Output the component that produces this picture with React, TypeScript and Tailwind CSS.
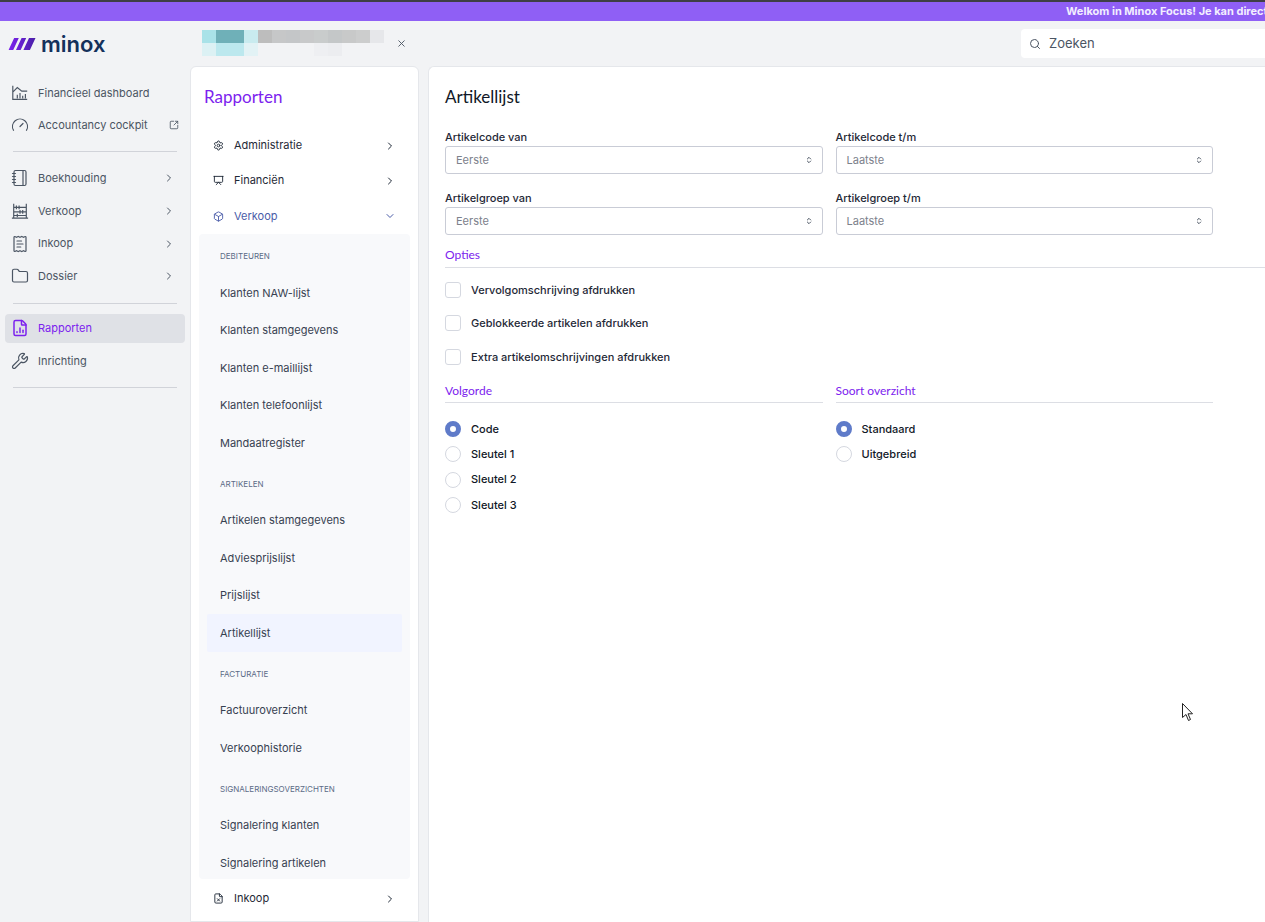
import React from 'react';
import { ChevronRight, ChevronDown, ChevronsUpDown, X, Search, Folder, Settings, Presentation, SquareArrowOutUpRight, Wrench, FileChartColumn, Notebook, ReceiptText, Gauge, Box, FileX } from 'lucide-react';

const mosaic = [
  ['#a9e2e8', '#6fb0b8', '#6fb0b8', '#c9ebef', '#bdbdbd', '#c6c7c8', '#c4c6c8', '#c8c9ca', '#c9cccc', '#c4c7c8', '#c8c9c9', '#cccdcd', '#e6e7ea'],
  ['#dcf1f4', '#bce8ee', '#bce8ee', '#e2f2f5', '#f2f3f5', '#f2f3f5', '#f2f3f5', '#f2f3f5', '#eeeff2', '#ecedf0', '#f2f3f5', '#f2f3f5', '#f2f3f5'],
];

function HouseChart({ className }: { className?: string }) {
  return (
    <svg viewBox="0 0 20 20" fill="none" stroke="currentColor" strokeWidth="1.3" className={className}>
      <path d="M2 2v15h16M2 9l5-5 5 4 6 0" />
      <path d="M7 16v-4M10 16v-6M13 16v-3M16 16v-5" />
    </svg>
  );
}

function Abacus({ className }: { className?: string }) {
  return (
    <svg viewBox="0 0 20 20" fill="none" stroke="currentColor" strokeWidth="1.3" className={className}>
      <path d="M3 2v16M17 2v16M1 18h18M3 6h14M3 11h14M3 15h14" />
      <path d="M6 4v4M9 4v4M13 9v4M10 9v4M7 13v4" />
    </svg>
  );
}

const mainNav = [
  { label: 'Boekhouding', icon: Notebook },
  { label: 'Verkoop', icon: Abacus },
  { label: 'Inkoop', icon: ReceiptText },
  { label: 'Dossier', icon: Folder },
];

const groups = [
  { title: 'Debiteuren', items: ['Klanten NAW-lijst', 'Klanten stamgegevens', 'Klanten e-maillijst', 'Klanten telefoonlijst', 'Mandaatregister'] },
  { title: 'Artikelen', items: ['Artikelen stamgegevens', 'Adviesprijslijst', 'Prijslijst', 'Artikellijst'] },
  { title: 'Facturatie', items: ['Factuuroverzicht', 'Verkoophistorie'] },
  { title: 'Signaleringsoverzichten', items: ['Signalering klanten', 'Signalering artikelen'] },
];

function Select({ label, value }: { label: string; value: string }) {
  return (
    <div className="flex flex-col">
      <label className="h-[17px] text-[11px] leading-[17px] font-medium text-[#1f2937]">{label}</label>
      <div className="flex h-[28px] items-center justify-between rounded-[3px] border border-[#c9ccd6] pl-[10px] pr-[9px] text-[11px] text-[#7c818b]">
        {value}
        <ChevronsUpDown className="h-[8px] w-[8px] text-[#4b5563]" strokeWidth={3} />
      </div>
    </div>
  );
}

function Radio({ label, checked }: { label: string; checked?: boolean }) {
  return (
    <div className="flex h-[25.3px] items-center gap-[10px] text-[11px] font-medium text-[#111827]">
      {checked ? (
        <span className="h-[16px] w-[16px] rounded-full border-[5px] border-[#5f7bc9] bg-white" />
      ) : (
        <span className="h-[16px] w-[16px] rounded-full border border-[#d5d8e0] bg-white" />
      )}
      {label}
    </div>
  );
}

export default function App() {
  return (
    <div className="relative flex h-[922px] w-[1265px] flex-col overflow-hidden bg-[#f2f3f5] font-['Inter',sans-serif]">
      <div className="h-[2px] bg-[#3f3f46]" />
      <div className="h-[19px] overflow-hidden whitespace-nowrap bg-[#8f5ff5] pl-[1066px] text-[11px] leading-[19px] font-bold text-[#f3efff]">
        Welkom in Minox Focus! Je kan direct aan de slag met je administraties
      </div>

      <div className="flex flex-1">
        {/* left sidebar */}
        <div className="flex w-[190px] flex-col">
          <div className="flex h-[45px] items-center pl-[8px]">
            <svg viewBox="0 0 30 14" className="h-[13px] w-[29px]">
              <defs>
                <linearGradient id="logo" x1="0" x2="1" y1="0" y2="0">
                  <stop offset="0" stopColor="#7c22ee" />
                  <stop offset="1" stopColor="#4a1fa8" />
                </linearGradient>
              </defs>
              <path d="M0 14 L6 1 L11 1 L5 14Z M8 14 L14 1 L19 1 L13 14Z M16 14 L22 1 L29 1 L23 14Z" fill="url(#logo)" />
            </svg>
            <span className="ml-[4px] font-['Inter',sans-serif] text-[22px] leading-none font-semibold text-[#14315c]">minox</span>
          </div>
          <div className="mt-[11px] flex flex-col">
            <div className="flex h-[32px] items-center pl-[11px] text-[11px] text-[#4b5563]">
              <HouseChart className="mr-[9px] h-[18px] w-[18px] text-[#4b5563]" />
              Financieel dashboard
            </div>
            <div className="flex h-[32px] items-center pl-[11px] text-[11px] text-[#4b5563]">
              <Gauge className="mr-[9px] h-[18px] w-[18px] text-[#4b5563]" strokeWidth={1.6} />
              Accountancy cockpit
              <SquareArrowOutUpRight className="ml-[21px] h-[10px] w-[10px]" />
            </div>
            <div className="mx-[13px] my-[10px] h-px bg-[#d1d3d9]" />
            {mainNav.map(({ label, icon: Icon }) => (
              <div key={label} className="flex h-[32.7px] items-center pl-[11px] pr-[15px] text-[11px] text-[#4b5563]">
                <Icon className="mr-[9px] h-[18px] w-[18px] text-[#4b5563]" strokeWidth={1.6} />
                {label}
                <ChevronRight className="ml-auto h-[12px] w-[12px]" />
              </div>
            ))}
            <div className="mx-[13px] my-[10px] h-px bg-[#d1d3d9]" />
            <div className="mx-[5px] flex h-[29px] items-center rounded-[4px] bg-[#dfe1e6] pl-[6px] text-[11px] text-[#7c22ee]">
              <FileChartColumn className="mr-[9px] h-[18px] w-[18px]" strokeWidth={2} />
              Rapporten
            </div>
            <div className="mt-[2px] flex h-[32px] items-center pl-[11px] text-[11px] text-[#4b5563]">
              <Wrench className="mr-[9px] h-[18px] w-[18px]" strokeWidth={1.6} />
              Inrichting
            </div>
            <div className="mx-[13px] my-[10px] h-px bg-[#d1d3d9]" />
          </div>
        </div>

        <div className="flex min-w-0 flex-1 flex-col">
          {/* header */}
          <div className="flex h-[45px] items-center">
            <div className="mt-[-2px] ml-[12px] flex flex-col">
              {mosaic.map((row, r) => (
                <div key={r} className="flex">
                  {row.map((c, i) => (
                    <span key={i} className="h-[13px] w-[14px]" style={{ backgroundColor: c }} />
                  ))}
                </div>
              ))}
            </div>
            <X className="ml-[12px] h-[11px] w-[11px] text-[#4b5563]" />
            <div className="ml-auto flex h-[29px] w-[244px] items-center rounded-l-[4px] bg-white pl-[8px] text-[13px] text-[#4b5563]">
              <Search className="mr-[8px] h-[12px] w-[12px]" />
              Zoeken
            </div>
          </div>

          <div className="flex flex-1">
            {/* rapporten panel */}
            <div className="flex w-[229px] flex-col rounded-t-[6px] border border-[#e5e7eb] bg-white">
              <h2 className="mt-[18px] ml-[13px] h-[24px] font-['Lato',sans-serif] text-[17px] leading-[24px] text-[#7c22ee]">Rapporten</h2>
              <div className="mt-[19px] flex flex-col">
                <div className="flex h-[35px] items-center pl-[22px] pr-[22px] text-[11px] text-[#1f2937]">
                  <Settings className="mr-[10px] h-[11px] w-[11px]" />
                  Administratie
                  <ChevronRight className="ml-auto h-[12px] w-[12px]" />
                </div>
                <div className="flex h-[35px] items-center pl-[22px] pr-[22px] text-[11px] text-[#1f2937]">
                  <Presentation className="mr-[10px] h-[11px] w-[11px]" />
                  Financiën
                  <ChevronRight className="ml-auto h-[12px] w-[12px]" />
                </div>
                <div className="flex h-[36px] items-center pl-[22px] pr-[22px] text-[11px] text-[#4a5ca8]">
                  <Box className="mr-[10px] h-[11px] w-[11px]" />
                  Verkoop
                  <ChevronDown className="ml-auto h-[12px] w-[12px]" />
                </div>
              </div>
              <div className="mx-[8px] flex h-[645px] flex-col rounded-[4px] bg-[#f8f9fb] px-[8px] pt-[10px]">
                {groups.map((group) => (
                  <div key={group.title} className="flex flex-col">
                    <div className="flex h-[24px] items-center pl-[13px] text-[8px] text-[#5b6b86] uppercase">{group.title}</div>
                    <div className="mt-[6px] mb-[10px] flex flex-col">
                      {group.items.map((item) => (
                        <div key={item} className={item === 'Artikellijst' ? 'flex h-[37.5px] items-center rounded-[2px] bg-[#f1f4ff] pl-[13px] text-[11px] text-[#374151]' : 'flex h-[37.5px] items-center pl-[13px] text-[11px] text-[#374151]'}>
                          {item}
                        </div>
                      ))}
                    </div>
                  </div>
                ))}
              </div>
              <div className="mt-[2px] flex h-[35px] items-center pl-[22px] pr-[22px] text-[11px] text-[#1f2937]">
                <FileX className="mr-[10px] h-[11px] w-[11px]" />
                Inkoop
                <ChevronRight className="ml-auto h-[12px] w-[12px]" />
              </div>
            </div>

            <div className="w-[9px] bg-[#f2f3f5]" />

            {/* main panel */}
            <div className="flex-1 rounded-tl-[6px] border-l border-t border-[#e5e7eb] bg-white pl-[16px] pt-[18px]">
              <h1 className="h-[24px] font-['Lato',sans-serif] text-[17px] leading-[24px] text-[#111827]">Artikellijst</h1>
              <div className="mt-[20px] grid w-[768px] grid-cols-2 gap-x-[13px] gap-y-[16px]">
                <Select label="Artikelcode van" value="Eerste" />
                <Select label="Artikelcode t/m" value="Laatste" />
                <Select label="Artikelgroep van" value="Eerste" />
                <Select label="Artikelgroep t/m" value="Laatste" />
              </div>
              <div className="mt-[12px] border-b border-[#dcdee4] pb-[4px] font-['Lato',sans-serif] text-[12px] leading-[16px] text-[#7c22ee]">Opties</div>
              <div className="mt-[5px] flex flex-col">
                {['Vervolgomschrijving afdrukken', 'Geblokkeerde artikelen afdrukken', 'Extra artikelomschrijvingen afdrukken'].map((t) => (
                  <div key={t} className="flex h-[33.5px] items-center gap-[10px] text-[11px] font-medium text-[#1f2937]">
                    <span className="h-[16px] w-[16px] rounded-[3px] border border-[#d5d8e0]" />
                    {t}
                  </div>
                ))}
              </div>
              <div className="mt-[9px] grid w-[768px] grid-cols-2 gap-x-[13px]">
                <div>
                  <div className="border-b border-[#dcdee4] pb-[3px] font-['Lato',sans-serif] text-[12px] leading-[16px] text-[#7c22ee]">Volgorde</div>
                  <div className="mt-[14px] flex flex-col">
                    <Radio label="Code" checked />
                    <Radio label="Sleutel 1" />
                    <Radio label="Sleutel 2" />
                    <Radio label="Sleutel 3" />
                  </div>
                </div>
                <div>
                  <div className="border-b border-[#dcdee4] pb-[3px] font-['Lato',sans-serif] text-[12px] leading-[16px] text-[#7c22ee]">Soort overzicht</div>
                  <div className="mt-[14px] flex flex-col">
                    <Radio label="Standaard" checked />
                    <Radio label="Uitgebreid" />
                  </div>
                </div>
              </div>
            </div>
          </div>
        </div>
      </div>

      {/* mouse pointer */}
      <svg viewBox="0 0 14 20" className="absolute top-[702px] left-[1181px] h-[20px] w-[14px]" fill="white" stroke="#222" strokeWidth="1">
        <path d="M1.5 1.5v14l3.5-3 2.5 6 2-1-2.500-5.700h4.500z" />
      </svg>
    </div>
  );
}
